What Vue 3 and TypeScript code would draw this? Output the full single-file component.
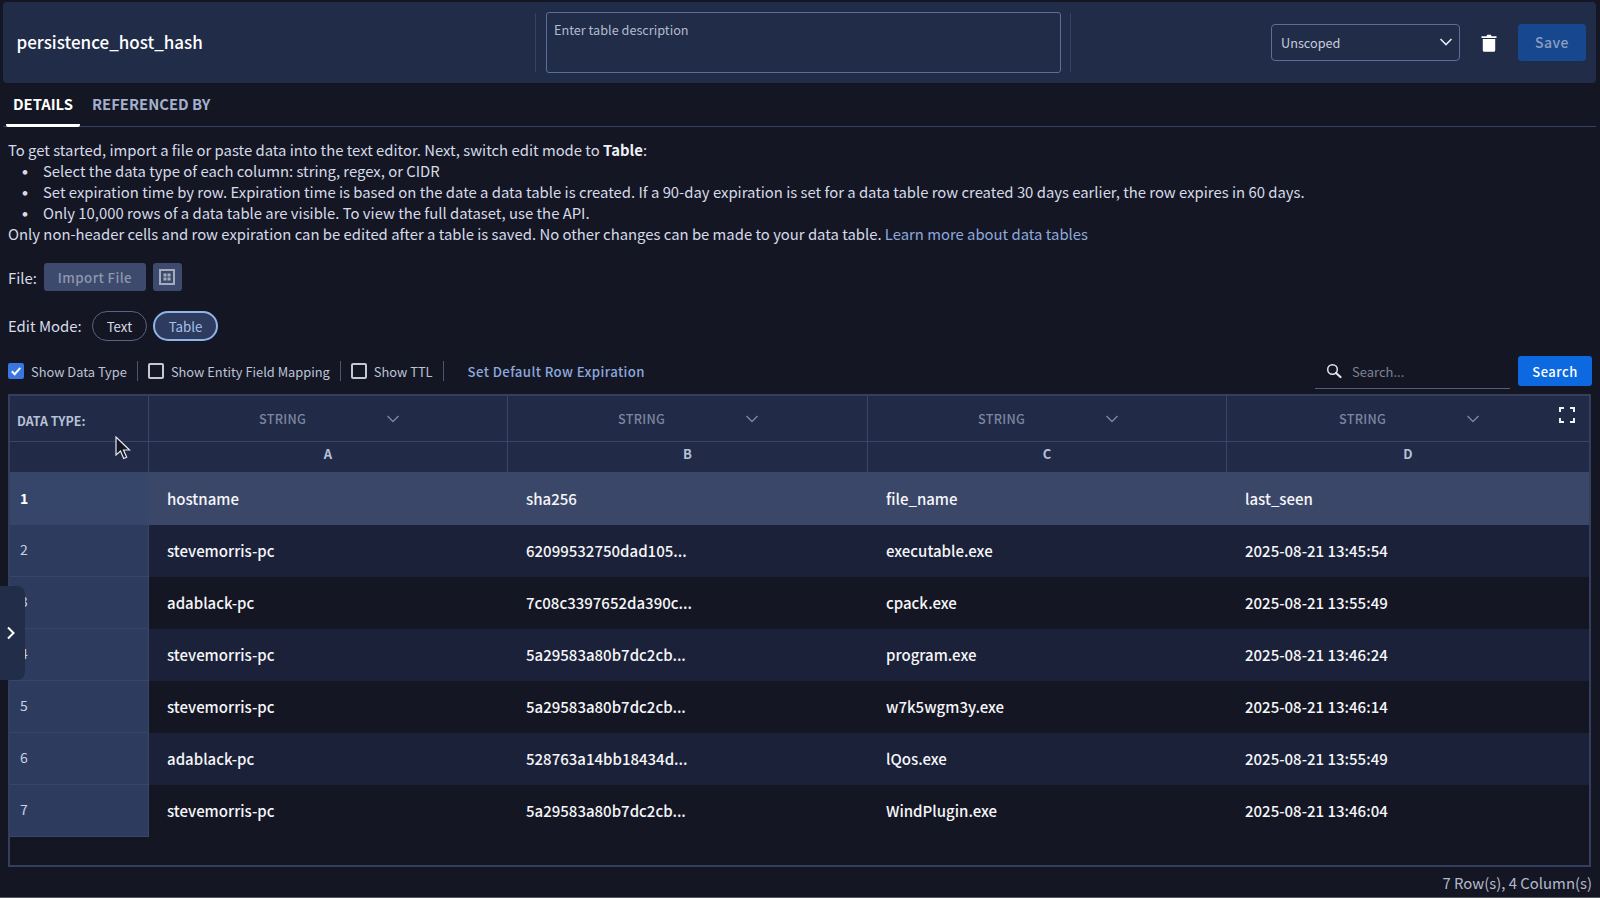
<template>
  <div class="page">
    <header class="top-bar">
      <div class="title-box">persistence_host_hash</div>
      <div class="desc-box">
        <textarea class="desc-input" placeholder="Enter table description"></textarea>
      </div>
      <div class="top-actions">
        <div class="scope-select">
          <span>Unscoped</span>
          <svg width="14" height="14" viewBox="0 0 14 14"><path d="M1.5 4l5.500 5.500L12.500 4" fill="none" stroke="#e3e8f2" stroke-width="1.600" /></svg>
        </div>
        <button type="button" class="trash-btn" aria-label="Delete">
          <svg width="16" height="18" viewBox="0 0 16 18">
            <path d="M5.500 2.200 6.200 .8h3.600l.7 1.400H15.500v1.800H.5V2.200z" fill="#fff" />
            <path d="M1.800 5h12.400v11.200a1.500 1.500 0 0 1-1.500 1.500H3.300a1.500 1.500 0 0 1-1.500-1.500z" fill="#fff" />
          </svg>
        </button>
        <button type="button" class="save-btn">Save</button>
      </div>
    </header>

    <nav class="tabs">
      <span class="tab tab-active">DETAILS</span>
      <span class="tab">REFERENCED BY</span>
    </nav>

    <section class="intro">
      <div>To get started, import a file or paste data into the text editor. Next, switch edit mode to <b>Table</b>:</div>
      <ul>
        <li>Select the data type of each column: string, regex, or CIDR</li>
        <li>Set expiration time by row. Expiration time is based on the date a data table is created. If a 90-day expiration is set for a data table row created 30 days earlier, the row expires in 60 days.</li>
        <li>Only 10,000 rows of a data table are visible. To view the full dataset, use the API.</li>
      </ul>
      <div>Only non-header cells and row expiration can be edited after a table is saved. No other changes can be made to your data table. <a class="link">Learn more about data tables</a></div>
    </section>

    <div class="file-row">
      <span class="field-label">File:</span>
      <button type="button" class="import-btn">Import File</button>
      <button type="button" class="grid-btn" aria-label="Template">
        <svg width="16" height="16" viewBox="0 0 16 16">
          <rect x="1" y="1" width="14" height="14" fill="none" stroke="#a3abbd" stroke-width="2" />
          <path d="M4.500 4.500h3v3h-3zM8.500 4.500h3v3h-3zM4.500 8.500h3v3h-3zM8.500 8.500h3v3h-3z" fill="#a3abbd" />
        </svg>
      </button>
    </div>

    <div class="mode-row">
      <span class="field-label">Edit Mode:</span>
      <span class="pill">Text</span>
      <span class="pill pill-active">Table</span>
    </div>

    <div class="toolbar">
      <label class="check-item">
        <span class="box box-on">
          <svg width="12" height="12" viewBox="0 0 12 12"><path d="M1.800 6.200 4.700 9.200 10.300 2.800" fill="none" stroke="#fff" stroke-width="2" /></svg>
        </span>
        Show Data Type
      </label>
      <i class="tool-sep"></i>
      <label class="check-item"><span class="box"></span>Show Entity Field Mapping</label>
      <i class="tool-sep"></i>
      <label class="check-item"><span class="box"></span>Show TTL</label>
      <i class="tool-sep"></i>
      <a class="expiry-link">Set Default Row Expiration</a>
      <div class="search-wrap">
        <div class="search-field">
          <svg width="16" height="16" viewBox="0 0 16 16">
            <circle cx="6.500" cy="6.500" r="4.800" fill="none" stroke="#e3e6ee" stroke-width="1.500" />
            <path d="M10 10l4.500 4" stroke="#e3e6ee" stroke-width="2.200" stroke-linecap="round" />
          </svg>
          <span>Search...</span>
        </div>
        <button type="button" class="search-btn">Search</button>
      </div>
    </div>

    <div class="table-frame">
      <table class="data-table">
        <colgroup>
          <col class="col-index" />
          <col v-for="col in columns" :key="col.letter" :style="{ width: col.width + 'px' }" />
        </colgroup>
        <thead>
          <tr class="type-row">
            <th class="corner">DATA TYPE:</th>
            <th v-for="col in columns" :key="col.letter">
              <div class="type-cell">
                <span>STRING</span>
                <svg width="14" height="14" viewBox="0 0 14 14"><path d="M1.500 4l5.500 5.500L12.500 4" fill="none" stroke="#7b86a0" stroke-width="1.400" /></svg>
              </div>
            </th>
          </tr>
          <tr class="letter-row">
            <th class="corner"></th>
            <th v-for="col in columns" :key="col.letter">{{ col.letter }}</th>
          </tr>
        </thead>
        <tbody>
          <tr v-for="(row, i) in rows" :key="i" :class="{ 'head-row': i === 0, 'odd-row': i > 0 && i % 2 === 1 }">
            <td class="index-cell">{{ i + 1 }}</td>
            <td v-for="(cell, c) in row" :key="c">{{ cell }}</td>
          </tr>
        </tbody>
      </table>
      <svg class="expand-icon" width="16" height="16" viewBox="0 0 16 16">
        <path d="M1 5V1h4M11 1h4v4M15 11v4h-4M5 15H1v-4" fill="none" stroke="#eef1f7" stroke-width="2" />
      </svg>
      <svg class="cursor" width="16" height="25" viewBox="0 0 16 25">
        <path d="M1 1v18l4.500-4 3.200 7.500 3-1.300L8.500 14h6z" fill="#141623" stroke="#e8eaf0" stroke-width="1.200" />
      </svg>
    </div>

    <div class="table-count">7 Row(s), 4 Column(s)</div>

    <div class="side-handle">
      <svg width="10" height="14" viewBox="0 0 10 14"><path d="M2 1.500 7.500 7 2 12.500" fill="none" stroke="#fff" stroke-width="2" /></svg>
    </div>
  </div>
</template>

<script setup lang="ts">
interface Column {
  letter: string
  width: number
}

const columns: Column[] = [
  { letter: 'A', width: 359 },
  { letter: 'B', width: 360 },
  { letter: 'C', width: 359 },
  { letter: 'D', width: 362 }
]

const rows: string[][] = [
  ['hostname', 'sha256', 'file_name', 'last_seen'],
  ['stevemorris-pc', '62099532750dad105...', 'executable.exe', '2025-08-21 13:45:54'],
  ['adablack-pc', '7c08c3397652da390c...', 'cpack.exe', '2025-08-21 13:55:49'],
  ['stevemorris-pc', '5a29583a80b7dc2cb...', 'program.exe', '2025-08-21 13:46:24'],
  ['stevemorris-pc', '5a29583a80b7dc2cb...', 'w7k5wgm3y.exe', '2025-08-21 13:46:14'],
  ['adablack-pc', '528763a14bb18434d...', 'lQos.exe', '2025-08-21 13:55:49'],
  ['stevemorris-pc', '5a29583a80b7dc2cb...', 'WindPlugin.exe', '2025-08-21 13:46:04']
]
</script>

<style>
html,
body {
  margin: 0;
  background: #151624;
}
</style>

<style scoped>
.page {
  position: relative;
  height: 898px;
  overflow: hidden;
  box-sizing: border-box;
  padding: 2px 4px 0 3px;
  background: #151624;
  color: #d5dbe8;
  font-family: "Noto Sans CJK SC", "Noto Sans", sans-serif;
  font-size: 15px;
  border-bottom: 1px solid #55565c;
}

.top-bar {
  display: flex;
  align-items: center;
  height: 81px;
  background: #212c49;
  border-radius: 4px;
}

.title-box {
  width: 533px;
  height: 59px;
  box-sizing: border-box;
  padding: 0 0 2px 13.500px;
  display: flex;
  align-items: center;
  border-right: 1px solid #38435f;
  color: #fff;
  font-size: 17px;
  font-weight: 500;
}

.desc-box {
  width: 535px;
  height: 59px;
  box-sizing: border-box;
  padding: 0 9px 0 10px;
  border-right: 1px solid #38435f;
}

.desc-input {
  display: block;
  width: 100%;
  height: 61px;
  margin-top: -1px;
  box-sizing: border-box;
  padding: 7px 7px;
  background: #212c49;
  border: 1px solid #5d6f96;
  border-radius: 3px;
  font: inherit;
  font-size: 12.700px;
  line-height: 20px;
  resize: none;
  outline: none;
}

.desc-input::placeholder {
  color: #b3bbcc;
  opacity: 1;
}

.top-actions {
  display: flex;
  align-items: center;
  margin-left: auto;
  padding-right: 10px;
}

.scope-select {
  width: 189px;
  height: 37px;
  box-sizing: border-box;
  padding: 0 6px 1px 9px;
  display: flex;
  align-items: center;
  justify-content: space-between;
  border: 1px solid #5d6f96;
  border-radius: 4px;
  color: #c6cddc;
  font-size: 12.700px;
}

.trash-btn {
  width: 58px;
  height: 37px;
  padding: 0;
  display: flex;
  align-items: center;
  justify-content: center;
  background: none;
  border: 0;
}

.save-btn {
  width: 68px;
  height: 37px;
  padding: 0 0 2px;
  background: #17478f;
  color: #8c9ebf;
  border: 0;
  border-radius: 4px;
  font: inherit;
  font-size: 14px;
  font-weight: 500;
  letter-spacing: 0.5px;
}

.tabs {
  display: flex;
  height: 44px;
  box-sizing: border-box;
  border-bottom: 1px solid #33405f;
  padding-left: 3px;
}

.tab {
  padding: 0 7px;
  margin-right: 5px;
  line-height: 42px;
  font-size: 14.800px;
  font-weight: 700;
  color: #a3b1cc;
}

.tab-active {
  color: #fff;
  height: 44px;
  width: 74px;
  box-sizing: border-box;
  border-bottom: 3px solid #fff;
  border-radius: 0 0 2px 2px;
}

.intro {
  margin: 11.600px 0 0 5px;
  font-size: 14.850px;
  line-height: 21.200px;
  color: #d5dbe8;
}

.intro b {
  font-weight: 700;
  color: #eef1f7;
}

.intro ul {
  margin: 0;
  padding: 0;
  list-style: none;
}

.intro li {
  display: flex;
}

.intro li::before {
  content: "•";
  flex: 0 0 auto;
  box-sizing: border-box;
  width: 35px;
  padding-left: 6px;
  font-size: 22px;
}

.link {
  color: #8ba9dc;
}

.file-row {
  display: flex;
  align-items: center;
  gap: 7px;
  margin: 18.400px 0 0 5px;
  height: 28px;
}

.field-label {
  font-size: 14.900px;
  color: #d5dbe8;
}

.import-btn {
  width: 102px;
  height: 28px;
  padding: 0;
  border: 0;
  border-radius: 3px;
  background: #3d4a6d;
  color: #8e97ad;
  font: inherit;
  font-size: 13.300px;
  font-weight: 500;
  letter-spacing: 0.4px;
}

.grid-btn {
  width: 29px;
  height: 28px;
  padding: 0;
  display: flex;
  align-items: center;
  justify-content: center;
  border: 0;
  border-radius: 3px;
  background: #3d4a6d;
}

.mode-row {
  display: flex;
  align-items: center;
  margin: 20px 0 0 5px;
  height: 30px;
}

.mode-row .field-label {
  margin-right: 4px;
  padding-bottom: 2px;
}

.pill {
  box-sizing: border-box;
  height: 30px;
  margin-left: 6px;
  padding: 0 14px;
  display: flex;
  align-items: center;
  border: 1px solid #58637f;
  border-radius: 15px;
  font-size: 13.300px;
  color: #d5dbe8;
}

.pill-active {
  padding: 0 13.500px;
  border: 2.500px solid #8fb4ec;
  background: #2d3b5e;
  color: #a6c0ea;
}

.toolbar {
  display: flex;
  align-items: center;
  margin: 14px 4px 0 5px;
  height: 32px;
  font-size: 12.850px;
  color: #bcc4d6;
}

.check-item {
  display: flex;
  align-items: center;
  gap: 7px;
}

.box {
  box-sizing: border-box;
  width: 16px;
  height: 16px;
  display: flex;
  align-items: center;
  justify-content: center;
  border: 2px solid #c3c8d4;
  border-radius: 2px;
}

.box-on {
  background: #3a76e0;
  border-color: #3a76e0;
}

.tool-sep {
  width: 1px;
  height: 20px;
  margin: 0 10px;
  background: #4a5573;
}

.expiry-link {
  margin-left: 14px;
  color: #8ba9dc;
  font-size: 13.200px;
  font-weight: 500;
  letter-spacing: 0.4px;
}

.search-wrap {
  display: flex;
  align-items: center;
  gap: 8px;
  margin-left: auto;
}

.search-field {
  width: 195px;
  height: 33px;
  box-sizing: border-box;
  margin-top: 3px;
  padding: 0 0 2px 11px;
  display: flex;
  align-items: center;
  gap: 10px;
  border-bottom: 1px solid #535e7c;
  color: #7d8396;
  font-size: 13px;
}

.search-btn {
  width: 74px;
  height: 30px;
  padding: 0;
  border: 0;
  border-radius: 3px;
  background: #0d69df;
  color: #fff;
  font: inherit;
  font-size: 13px;
  font-weight: 500;
  letter-spacing: 0.5px;
}

.table-frame {
  position: relative;
  height: 473px;
  box-sizing: border-box;
  margin: 7px 5px 0 5px;
  border: 2px solid #343f5e;
}

.data-table {
  width: 100%;
  table-layout: fixed;
  border-collapse: separate;
  border-spacing: 0;
}

.col-index {
  width: 139px;
}

thead th {
  background: #212a47;
  border-right: 1px solid #3a4665;
  border-bottom: 1px solid #3a4665;
  padding: 0;
}

thead th:last-child {
  border-right: 0;
}

.type-row th {
  height: 45px;
}

.letter-row th {
  height: 22px;
  padding-bottom: 8px;
  color: #b7c1d6;
  font-size: 13px;
  font-weight: 700;
  border-bottom: 0;
}

.type-row th.corner {
  padding: 4px 0 0 7px;
  height: 41px;
}

th.corner {
  text-align: left;
  font-size: 12.450px;
  font-weight: 700;
  color: #b7c1d6;
}

.type-cell {
  display: flex;
  align-items: center;
  padding-left: 110px;
  color: #7b86a0;
  font-size: 12.600px;
  font-weight: 500;
  letter-spacing: 0.3px;
}

.type-row th:last-child .type-cell {
  padding-left: 112px;
}

.type-cell span {
  width: 127px;
  text-align: left;
}

tbody td {
  height: 52px;
  box-sizing: border-box;
  padding: 0 0 2px 18px;
  color: #f5f6f9;
  font-size: 15px;
  font-weight: 500;
  white-space: nowrap;
  overflow: hidden;
}

td.index-cell {
  padding: 0 0 3px 10px;
  font-size: 14px;
  font-weight: 400;
  color: #c9d2e2;
  background: #2d3c5e;
  border-right: 1px solid #3a4665;
  border-bottom: 1px solid #3a4665;
}

.odd-row td {
  background: #1b2138;
}

.odd-row td.index-cell {
  background: #2d3c5e;
}

.head-row td {
  height: 53px;
  padding-bottom: 0;
  background: #3b4769;
}

.head-row td.index-cell {
  padding-bottom: 0;
  background: #36456a;
  color: #fff;
  font-weight: 700;
}

.expand-icon {
  position: absolute;
  top: 11px;
  right: 14px;
}

.cursor {
  position: absolute;
  top: 40px;
  left: 105px;
}

.table-count {
  margin: 6px 4px 0 0;
  text-align: right;
  color: #b3bacb;
  font-size: 14.900px;
  line-height: 20px;
}

.side-handle {
  position: absolute;
  left: 0;
  top: 586px;
  width: 25px;
  height: 94px;
  display: flex;
  align-items: center;
  padding-left: 6px;
  box-sizing: border-box;
  background: #222d49;
  border-radius: 0 8px 8px 0;
}
</style>
